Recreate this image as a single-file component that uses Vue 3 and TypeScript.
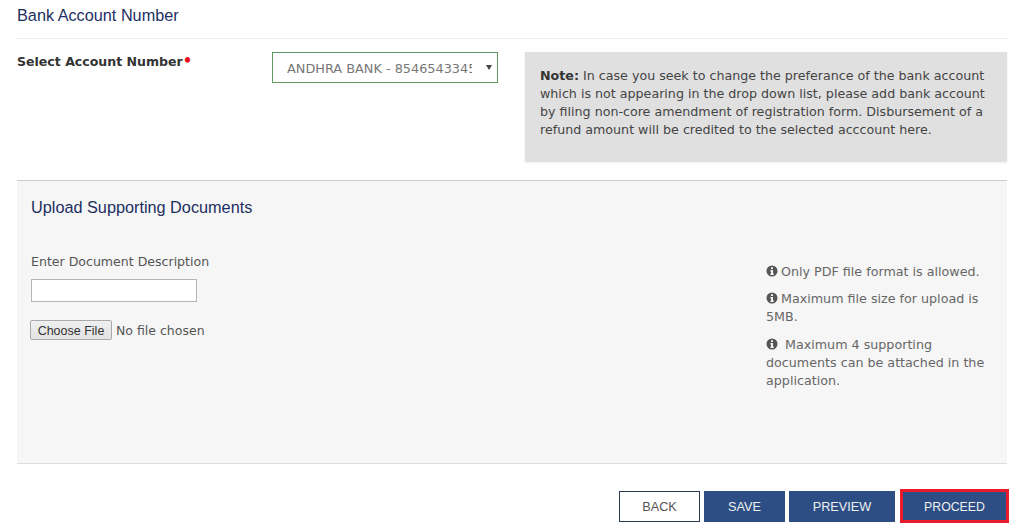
<script setup lang="ts">
const notes = [
  { text: 'Only PDF file format is allowed.', wide: false },
  { text: 'Maximum file size for upload is 5MB.', wide: false },
  { text: 'Maximum 4 supporting documents can be attached in the application.', wide: true },
]
</script>

<template>
  <main class="page">
    <h4 class="head">Bank Account Number</h4>
    <section class="account">
      <label class="acct-label" for="acct">Select Account Number<span class="req">•</span></label>
      <div class="select-wrap">
        <select id="acct" class="acct-select">
          <option>ANDHRA BANK - 85465433455678</option>
        </select>
      </div>
      <div class="note">
        <b>Note:</b> In case you seek to change the preferance of the bank account which is not appearing in the drop down list, please add bank account by filing non-core amendment of registration form. Disbursement of a refund amount will be credited to the selected acccount here.
      </div>
    </section>
    <section class="upload">
      <div class="upload-left">
        <h4 class="upload-title">Upload Supporting Documents</h4>
        <label class="desc-label" for="desc">Enter Document Description</label>
        <input id="desc" class="desc-input" type="text" />
        <input class="file" type="file" />
      </div>
      <ul class="rules">
        <li v-for="n in notes" :key="n.text">
          <svg class="info" :class="{ wide: n.wide }" viewBox="0 0 24 24" aria-hidden="true">
            <path fill-rule="evenodd" d="M12 1a11 11 0 1 0 0 22 11 11 0 0 0 0-22zM10 4.500h4v3.600h-4zM8.800 10h5.200v7.200h1.400V20H8.800v-2.800h1.400v-4.400H8.800z" />
          </svg>{{ n.text }}
        </li>
      </ul>
    </section>
    <footer class="actions">
      <button class="btn back" type="button">BACK</button>
      <button class="btn save" type="button">SAVE</button>
      <button class="btn preview" type="button">PREVIEW</button>
      <button class="btn proceed" type="button">PROCEED</button>
    </footer>
  </main>
</template>

<style>
html, body { margin: 0; background: #fff; overflow: hidden; }
</style>

<style scoped>
.page {
  width: 1024px;
  height: 530px;
  box-sizing: border-box;
  padding: 0 17px;
  font-family: "DejaVu Sans", Verdana, sans-serif;
  font-size: 12.55px;
  line-height: 18px;
  color: #555;
}
.head {
  margin: 0;
  height: 39px;
  box-sizing: border-box;
  padding-top: 6px;
  font: 400 16.25px/18px "Liberation Sans", Arial, sans-serif;
  color: #1d2f5f;
  border-bottom: 1px solid #eee;
}
.account {
  display: flex;
  align-items: flex-start;
  height: 141px;
  box-sizing: border-box;
  padding-top: 13px;
}
.acct-label {
  width: 255px;
  flex: none;
  font-weight: 700;
  font-size: 12.55px;
  line-height: 19px;
  color: #333;
}
.req {
  display: inline-block;
  color: #e8101e;
  font-size: 15px;
  line-height: 12px;
  vertical-align: 0;
}
.select-wrap {
  position: relative;
  width: 226px;
  flex: none;
}
.select-wrap::after {
  content: "";
  position: absolute;
  right: 6px;
  top: 13px;
  border-style: solid;
  border-width: 5px 3px 0;
  border-color: #444 transparent transparent;
}
.acct-select {
  display: block;
  width: 100%;
  height: 31px;
  box-sizing: border-box;
  appearance: none;
  border: 1px solid #5f9a60;
  border-radius: 0;
  background: #fff;
  padding: 2px 25px 0 14px;
  font: inherit;
  font-size: 12.85px;
  color: #777;
}
.note {
  margin-left: 27px;
  width: 482px;
  height: 110px;
  box-sizing: border-box;
  padding: 15px 15px;
  background: #e0e0e0;
  color: #444;
  font-size: 12.67px;
  box-shadow: 0 1px 2px rgba(0, 0, 0, 0.08);
}
.note b { color: #333; }
.upload {
  display: flex;
  justify-content: space-between;
  height: 284px;
  box-sizing: border-box;
  background: #f6f6f6;
  border-top: 1px solid #ccc;
  border-bottom: 1px solid #ddd;
  padding: 0 14px;
}
.upload-left { display: flex; flex-direction: column; align-items: flex-start; }
.upload-title {
  margin: 17px 0 0;
  font: 400 16.25px/18px "Liberation Sans", Arial, sans-serif;
  color: #1d2f5f;
}
.desc-label { margin-top: 37px; color: #555; }
.desc-input {
  margin-top: 8px;
  width: 166px;
  height: 23px;
  box-sizing: border-box;
  border: 1px solid #b5b5b5;
  background: #fff;
  padding: 0 4px;
}
.file {
  margin: 18px 0 0 -1px;
  font: inherit;
  font-size: 12.5px;
  color: #555;
}
.file::file-selector-button {
  width: 82px;
  height: 20px;
  margin-right: 4px;
  padding: 1px 0 0;
  font: 400 12.5px "Liberation Sans", Arial, sans-serif;
  color: #333;
  background: linear-gradient(#f0f0f0, #e2e2e2);
  border: 1px solid #aaa;
  border-radius: 2px;
}
.rules {
  list-style: none;
  margin: 82px 0 0;
  padding: 0;
  width: 227px;
  color: #666;
  font-size: 12.7px;
}
.rules li { margin-bottom: 9.4px; }
.info {
  width: 12px;
  height: 12px;
  margin-right: 3px;
  vertical-align: -1px;
  fill: #555;
}
.info.wide { margin-right: 7px; }
.actions {
  display: flex;
  justify-content: flex-end;
  align-items: center;
  gap: 4px;
  margin-right: -2px;
  margin-top: 25px;
}
.btn {
  height: 31px;
  box-sizing: border-box;
  border: 0;
  border-radius: 0;
  padding: 1px 0 0;
  font: 400 12.7px "Liberation Sans", Arial, sans-serif;
  color: #f0f0f0;
  background: #2c4e85;
}
.back {
  width: 81px;
  background: #fff;
  color: #555;
  border: 1px solid #2a3a50;
}
.save { width: 81px; }
.preview { width: 106px; margin-right: 1px; }
.proceed {
  width: 109px;
  height: 34px;
  border: 3px solid #ea1c2c;
  font-size: 12.3px;
}
</style>
